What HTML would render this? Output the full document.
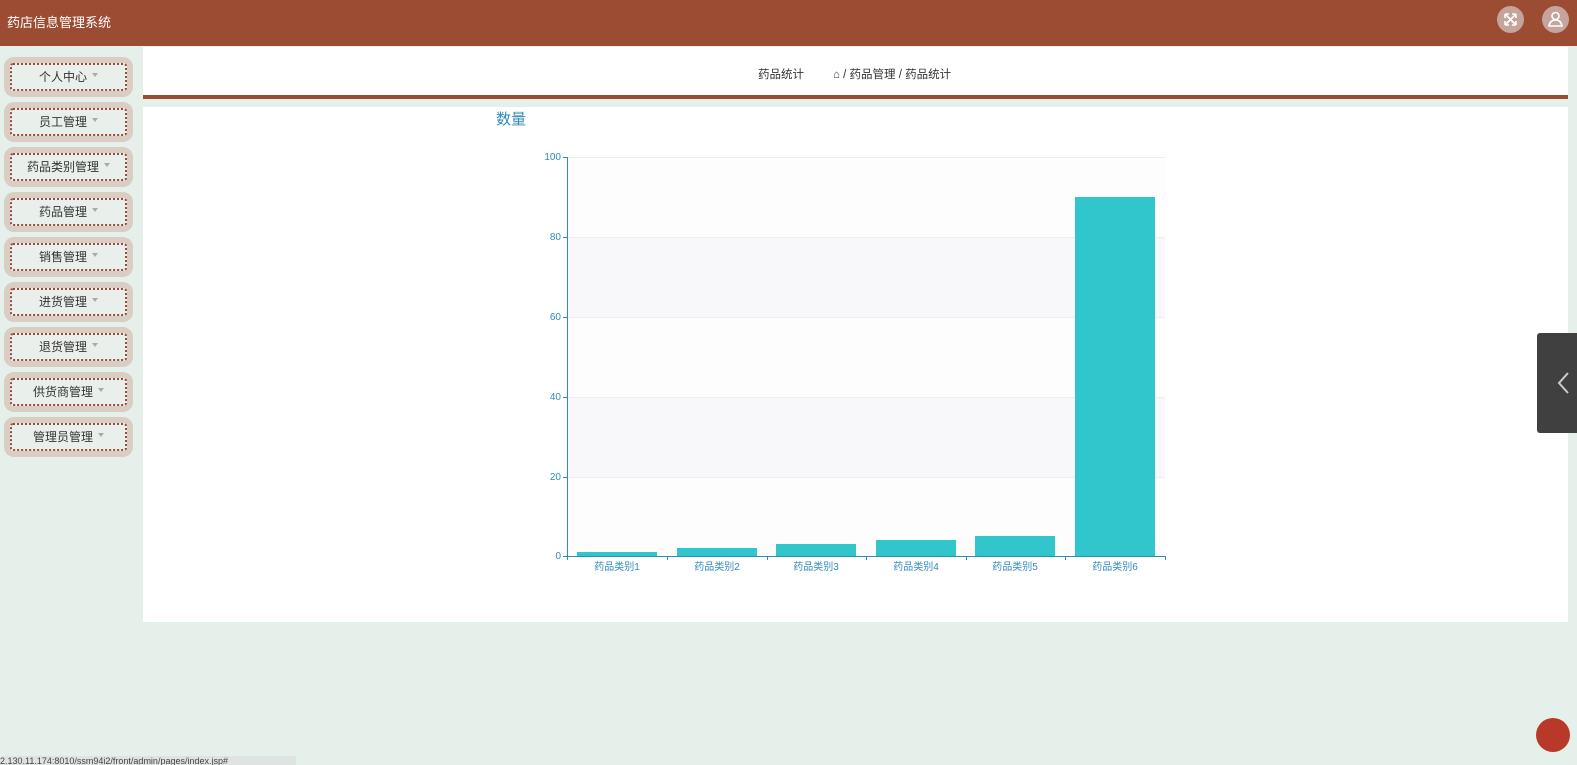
<!DOCTYPE html>
<html><head><meta charset="utf-8"><style>
*{margin:0;padding:0;box-sizing:border-box}
body{width:1577px;height:765px;overflow:hidden;background:#e6f0eb;font-family:"Liberation Sans","Noto Sans CJK SC",sans-serif;position:relative}
.hdr{position:absolute;left:0;top:0;width:1577px;height:46px;background:#9c4c33}
.hdr .t{position:absolute;left:7px;top:12px;color:#fff;font-size:13px}
.ic{position:absolute;top:6px;width:27px;height:27px;border-radius:50%;background:#c4a49b}
.menu{position:absolute;left:4px;width:129px;height:40px;background:#d9cdc4;border-radius:10px}
.menu div{position:absolute;left:6px;top:6px;width:117px;height:28px;border:2px dotted #9a4a3a;border-radius:3px;font-size:12px;color:#333;text-align:center;line-height:24px;background:#e9f0ec}
.menu div:after{content:"";display:inline-block;margin-left:5px;border:3px solid transparent;border-top:4px solid #aaa;vertical-align:1px}
.top{position:absolute;left:143px;top:47px;width:1425px;height:48px;background:#fff;font-size:11.5px;color:#333}
.bar{position:absolute;left:143px;top:95px;width:1425px;height:4px;background:#9c4c33}
.main{position:absolute;left:143px;top:107px;width:1425px;height:515px;background:#fff}
</style></head><body>
<div class="hdr"><span class="t">药店信息管理系统</span>
<div class="ic" style="left:1497px"><svg width="27" height="27"><g stroke="#fff" stroke-width="1.6" fill="none"><path d="M8 8l11 11M19 8L8 19M8 8h4M8 8v4M19 8h-4M19 8v4M8 19h4M8 19v-4M19 19h-4M19 19v-4"/></g></svg></div>
<div class="ic" style="left:1542px"><svg width="27" height="27"><g stroke="#fff" stroke-width="1.6" fill="none"><circle cx="13.5" cy="10" r="3.5"/><path d="M7 20q1-6 6.5-6t6.5 6z"/></g></svg></div>
</div>
<div class="menu" style="top:57px"><div>个人中心</div></div>
<div class="menu" style="top:102px"><div>员工管理</div></div>
<div class="menu" style="top:147px"><div>药品类别管理</div></div>
<div class="menu" style="top:192px"><div>药品管理</div></div>
<div class="menu" style="top:237px"><div>销售管理</div></div>
<div class="menu" style="top:282px"><div>进货管理</div></div>
<div class="menu" style="top:327px"><div>退货管理</div></div>
<div class="menu" style="top:372px"><div>供货商管理</div></div>
<div class="menu" style="top:417px"><div>管理员管理</div></div>
<div class="top"><span style="position:absolute;left:615px;top:19px">药品统计</span><span style="position:absolute;left:690px;top:19px">⌂ / 药品管理 / 药品统计</span></div>
<div class="bar"></div>
<div class="main"></div>
<svg style="position:absolute;left:0;top:0" width="1577" height="765" font-family="Liberation Sans, Noto Sans CJK SC, sans-serif">
<text x="496" y="124" font-size="15" fill="#2f8bbd">数量</text>
<rect x="567" y="157" width="598" height="80" fill="#fdfdfd"/><rect x="567" y="237" width="598" height="80" fill="#f8f8fa"/>
<rect x="567" y="317" width="598" height="80" fill="#fdfdfd"/><rect x="567" y="397" width="598" height="80" fill="#f8f8fa"/>
<rect x="567" y="477" width="598" height="79" fill="#fdfdfd"/>
<g stroke="#eee"><path d="M567 157.5H1165M567 237.5H1165M567 317.5H1165M567 397.5H1165M567 477.5H1165"/></g>
<g fill="#31c6cb"><rect x="577" y="552" width="80" height="4"/><rect x="677" y="548" width="80" height="8"/><rect x="776" y="544" width="80" height="12"/><rect x="876" y="540" width="80" height="16"/><rect x="975" y="536" width="80" height="20"/><rect x="1075" y="197" width="80" height="359"/></g>
<g stroke="#2f8bbd"><path d="M567.5 157V556M563 157.5h4M563 237.5h4M563 317.5h4M563 397.5h4M563 477.5h4M563 556.5h4M567 556.5H1165M567.5 556v4M667.5 556v4M767.5 556v4M866.5 556v4M966.5 556v4M1065.5 556v4M1165.5 556v4"/></g>
<g font-size="10" fill="#2f8bbd" text-anchor="end"><text x="561" y="160">100</text><text x="561" y="240">80</text><text x="561" y="320">60</text><text x="561" y="400">40</text><text x="561" y="480">20</text><text x="561" y="559">0</text></g>
<g font-size="10" fill="#2f8bbd" text-anchor="middle"><text x="617" y="570">药品类别1</text><text x="717" y="570">药品类别2</text><text x="816" y="570">药品类别3</text><text x="916" y="570">药品类别4</text><text x="1015" y="570">药品类别5</text><text x="1115" y="570">药品类别6</text></g>
<rect x="1537" y="333" width="45" height="100" rx="3" fill="#404040"/>
<path d="M1568 373l-9 10 9 10" stroke="#ccc" stroke-width="2" fill="none"/>
<circle cx="1553" cy="735" r="17" fill="#b8392a"/>
<rect x="0" y="756" width="296" height="12" rx="2" fill="#dfe3e1"/>
<text x="0" y="764" font-size="9" fill="#444">2.130.11.174:8010/ssm94i2/front/admin/pages/index.jsp#</text>
</svg>
</body></html>
